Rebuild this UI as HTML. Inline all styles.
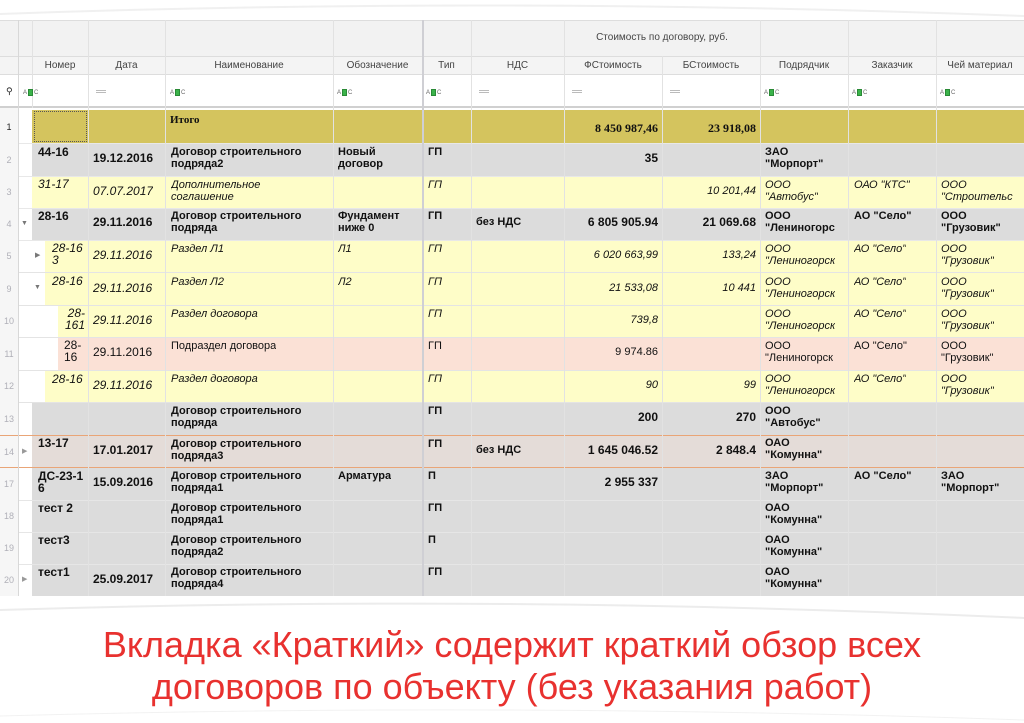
<!DOCTYPE html>
<html><head><meta charset="utf-8">
<style>
*{margin:0;padding:0;box-sizing:border-box}
body{width:1024px;height:723px;background:#fff;position:relative;overflow:hidden;font-family:"Liberation Sans","DejaVu Sans",sans-serif;font-size:11px;color:#111}
.a{position:absolute}
.c{position:absolute;line-height:12px;white-space:nowrap;overflow:hidden}
.r{text-align:right}
.b{font-weight:bold}
.i{font-style:italic}
.rn{position:absolute;left:0;width:18px;text-align:center;font-size:9px;color:#b0b0b8}
.h{position:absolute;font-size:10px;color:#444;text-align:center;line-height:12px}
.vl{position:absolute;top:20px;height:576px;width:1px;background:#e2e2e2}
.abc{position:absolute;top:89px;font-size:6px;color:#666}
.abc span{display:inline-block;width:5px;height:7px;background:#3bb34a;vertical-align:middle;margin:0 1px;border:1px solid #2a8a36}
.eq{position:absolute;top:90px;width:10px;height:3px;border-top:1px solid #bbb;border-bottom:1px solid #bbb}
.cap{position:absolute;left:0;width:1024px;text-align:center;color:#e8312f;font-size:36px;line-height:42px;white-space:nowrap}
</style></head><body>
<div class="a" style="left:0;top:20px;width:1024px;height:36px;background:#f2f2f2;border-top:1px solid #ddd"></div>
<div class="a" style="left:0;top:56px;width:1024px;height:19px;background:#f4f4f4;border-top:1px solid #ddd;border-bottom:1px solid #ddd"></div>
<div class="a" style="left:0;top:75px;width:1024px;height:33px;background:#fff;border-bottom:2px solid #d0d0d0"></div>
<div class="a" style="left:0;top:108px;width:18px;height:488px;background:#f6f6f6"></div>

<div class="a" style="left:32px;top:110px;width:992px;height:33px;background:#d4c45e"></div>
<div class="a" style="left:34px;top:111px;width:53px;height:31px;border:1px dotted #555"></div>
<div class="a" style="left:32px;top:143px;width:992px;height:33px;background:#dcdcdc"></div>
<div class="a" style="left:32px;top:176px;width:992px;height:32px;background:#fefdc8"></div>
<div class="a" style="left:32px;top:208px;width:992px;height:32px;background:#dcdcdc"></div>
<div class="a" style="left:45px;top:240px;width:979px;height:32px;background:#fefdc8"></div>
<div class="a" style="left:45px;top:272px;width:979px;height:33px;background:#fefdc8"></div>
<div class="a" style="left:58px;top:305px;width:966px;height:32px;background:#fefdc8"></div>
<div class="a" style="left:58px;top:337px;width:966px;height:33px;background:#fbe1d6"></div>
<div class="a" style="left:45px;top:370px;width:979px;height:32px;background:#fefdc8"></div>
<div class="a" style="left:32px;top:402px;width:992px;height:33px;background:#dcdcdc"></div>
<div class="a" style="left:32px;top:435px;width:992px;height:33px;background:#e4dcd8"></div>
<div class="a" style="left:0;top:435px;width:1024px;height:1px;background:#e9a577"></div>
<div class="a" style="left:0;top:467px;width:1024px;height:1px;background:#e9a577"></div>
<div class="a" style="left:32px;top:468px;width:992px;height:128px;background:#dcdcdc"></div>
<div class="a" style="left:18px;top:143px;width:1006px;height:1px;background:#e8e8e8"></div>
<div class="a" style="left:18px;top:176px;width:1006px;height:1px;background:#e8e8e8"></div>
<div class="a" style="left:18px;top:208px;width:1006px;height:1px;background:#e8e8e8"></div>
<div class="a" style="left:18px;top:240px;width:1006px;height:1px;background:#e8e8e8"></div>
<div class="a" style="left:18px;top:272px;width:1006px;height:1px;background:#e4e4e4"></div>
<div class="a" style="left:18px;top:305px;width:1006px;height:1px;background:#e4e4e4"></div>
<div class="a" style="left:18px;top:337px;width:1006px;height:1px;background:#e4e4e4"></div>
<div class="a" style="left:18px;top:370px;width:1006px;height:1px;background:#e4e4e4"></div>
<div class="a" style="left:18px;top:402px;width:1006px;height:1px;background:#e4e4e4"></div>
<div class="a" style="left:18px;top:500px;width:1006px;height:1px;background:#e6e6e6"></div>
<div class="a" style="left:18px;top:532px;width:1006px;height:1px;background:#e6e6e6"></div>
<div class="a" style="left:18px;top:564px;width:1006px;height:1px;background:#e6e6e6"></div>

<div class="vl" style="left:18px;background:#d8d8d8"></div>
<div class="vl" style="left:32px;height:88px"></div>
<div class="vl" style="left:88px"></div>
<div class="vl" style="left:165px"></div>
<div class="vl" style="left:333px"></div>
<div class="vl" style="left:422px;width:2px;background:#cfcfd4"></div>
<div class="vl" style="left:471px"></div>
<div class="vl" style="left:564px"></div>
<div class="vl" style="left:662px;top:56px;height:540px"></div>
<div class="vl" style="left:760px"></div>
<div class="vl" style="left:848px"></div>
<div class="vl" style="left:936px"></div>

<div class="h" style="left:564px;top:32px;width:196px">Стоимость по договору, руб.</div>
<div class="h" style="left:32px;top:60px;width:56px">Номер</div>
<div class="h" style="left:88px;top:60px;width:77px">Дата</div>
<div class="h" style="left:165px;top:60px;width:168px">Наименование</div>
<div class="h" style="left:333px;top:60px;width:89px">Обозначение</div>
<div class="h" style="left:422px;top:60px;width:49px">Тип</div>
<div class="h" style="left:471px;top:60px;width:93px">НДС</div>
<div class="h" style="left:564px;top:60px;width:98px">ФСтоимость</div>
<div class="h" style="left:662px;top:60px;width:98px">БСтоимость</div>
<div class="h" style="left:760px;top:60px;width:88px">Подрядчик</div>
<div class="h" style="left:848px;top:60px;width:88px">Заказчик</div>
<div class="h" style="left:936px;top:60px;width:88px">Чей материал</div>
<div class="a" style="left:6px;top:86px;font-size:9px;color:#222">&#9906;</div>
<div class="abc" style="left:23px">A<span></span>C</div>
<div class="eq" style="left:96px"></div>
<div class="abc" style="left:170px">A<span></span>C</div>
<div class="abc" style="left:337px">A<span></span>C</div>
<div class="abc" style="left:426px">A<span></span>C</div>
<div class="eq" style="left:479px"></div>
<div class="eq" style="left:572px"></div>
<div class="eq" style="left:670px"></div>
<div class="abc" style="left:764px">A<span></span>C</div>
<div class="abc" style="left:852px">A<span></span>C</div>
<div class="abc" style="left:940px">A<span></span>C</div>

<div class="rn" style="top:122px;color:#222">1</div>
<div class="rn" style="top:155px">2</div>
<div class="rn" style="top:187px">3</div>
<div class="rn" style="top:219px">4</div>
<div class="rn" style="top:251px">5</div>
<div class="rn" style="top:284px">9</div>
<div class="rn" style="top:316px">10</div>
<div class="rn" style="top:349px">11</div>
<div class="rn" style="top:381px">12</div>
<div class="rn" style="top:414px">13</div>
<div class="rn" style="top:447px">14</div>
<div class="rn" style="top:479px">17</div>
<div class="rn" style="top:511px">18</div>
<div class="rn" style="top:543px">19</div>
<div class="rn" style="top:575px">20</div>
<div class="a" style="left:21px;top:220px;font-size:7px;color:#777">&#9660;</div>
<div class="a" style="left:35px;top:251px;font-size:7px;color:#777">&#9654;</div>
<div class="a" style="left:34px;top:284px;font-size:7px;color:#777">&#9660;</div>
<div class="a" style="left:22px;top:447px;font-size:7px;color:#999">&#9654;</div>
<div class="a" style="left:22px;top:575px;font-size:7px;color:#999">&#9654;</div>

<div class="c b" style="left:170px;top:114px;font-family:'Liberation Serif',serif">Итого</div>
<div class="c r b" style="left:564px;top:122px;width:94px;font-family:'Liberation Serif',serif;font-size:12px">8 450 987,46</div>
<div class="c r b" style="left:662px;top:122px;width:94px;font-family:'Liberation Serif',serif;font-size:12px">23 918,08</div>
<div class="b">
<div class="c" style="left:38px;top:146px;font-size:12px">44-16</div>
<div class="c" style="left:93px;top:152px;font-size:12px">19.12.2016</div>
<div class="c" style="left:171px;top:146px">Договор строительного<br>подряда2</div>
<div class="c" style="left:338px;top:146px">Новый<br>договор</div>
<div class="c" style="left:428px;top:146px">ГП</div>
<div class="c r" style="left:564px;top:152px;width:94px;font-size:12px">35</div>
<div class="c" style="left:765px;top:146px">ЗАО<br>"Морпорт"</div>
</div>
<div class="i">
<div class="c" style="left:38px;top:178px;font-size:12px">31-17</div>
<div class="c" style="left:93px;top:185px;font-size:12px">07.07.2017</div>
<div class="c" style="left:171px;top:179px">Дополнительное<br>соглашение</div>
<div class="c" style="left:428px;top:179px">ГП</div>
<div class="c r" style="left:662px;top:185px;width:94px">10 201,44</div>
<div class="c" style="left:765px;top:179px">ООО<br>"Автобус"</div>
<div class="c" style="left:854px;top:179px">ОАО "КТС"</div>
<div class="c" style="left:941px;top:179px">ООО<br>"Строительс</div>
</div>
<div class="b">
<div class="c" style="left:38px;top:210px;font-size:12px">28-16</div>
<div class="c" style="left:93px;top:216px;font-size:12px">29.11.2016</div>
<div class="c" style="left:171px;top:210px">Договор строительного<br>подряда</div>
<div class="c" style="left:338px;top:210px">Фундамент<br>ниже 0</div>
<div class="c" style="left:428px;top:210px">ГП</div>
<div class="c" style="left:476px;top:216px">без НДС</div>
<div class="c r" style="left:564px;top:216px;width:94px;font-size:12px">6 805 905.94</div>
<div class="c r" style="left:662px;top:216px;width:94px;font-size:12px">21 069.68</div>
<div class="c" style="left:765px;top:210px">ООО<br>"Лениногорс</div>
<div class="c" style="left:854px;top:210px">АО "Село"</div>
<div class="c" style="left:941px;top:210px">ООО<br>"Грузовик"</div>
</div>
<div class="i">
<div class="c" style="left:52px;top:242px;font-size:12px">28-16<br>3</div>
<div class="c" style="left:93px;top:249px;font-size:12px">29.11.2016</div>
<div class="c" style="left:171px;top:243px">Раздел Л1</div>
<div class="c" style="left:338px;top:243px">Л1</div>
<div class="c" style="left:428px;top:243px">ГП</div>
<div class="c r" style="left:564px;top:249px;width:94px">6 020 663,99</div>
<div class="c r" style="left:662px;top:249px;width:94px">133,24</div>
<div class="c" style="left:765px;top:243px">ООО<br>"Лениногорск</div>
<div class="c" style="left:854px;top:243px">АО "Село"</div>
<div class="c" style="left:941px;top:243px">ООО<br>"Грузовик"</div>
</div>
<div class="i">
<div class="c" style="left:52px;top:275px;font-size:12px">28-16</div>
<div class="c" style="left:93px;top:282px;font-size:12px">29.11.2016</div>
<div class="c" style="left:171px;top:276px">Раздел Л2</div>
<div class="c" style="left:338px;top:276px">Л2</div>
<div class="c" style="left:428px;top:276px">ГП</div>
<div class="c r" style="left:564px;top:282px;width:94px">21 533,08</div>
<div class="c r" style="left:662px;top:282px;width:94px">10 441</div>
<div class="c" style="left:765px;top:276px">ООО<br>"Лениногорск</div>
<div class="c" style="left:854px;top:276px">АО "Село"</div>
<div class="c" style="left:941px;top:276px">ООО<br>"Грузовик"</div>
</div>
<div class="i">
<div class="c r" style="left:58px;top:307px;width:27px;font-size:12px">28-<br>161</div>
<div class="c" style="left:93px;top:314px;font-size:12px">29.11.2016</div>
<div class="c" style="left:171px;top:308px">Раздел договора</div>
<div class="c" style="left:428px;top:308px">ГП</div>
<div class="c r" style="left:564px;top:314px;width:94px">739,8</div>
<div class="c" style="left:765px;top:308px">ООО<br>"Лениногорск</div>
<div class="c" style="left:854px;top:308px">АО "Село"</div>
<div class="c" style="left:941px;top:308px">ООО<br>"Грузовик"</div>
</div>
<div>
<div class="c" style="left:64px;top:339px;font-size:12px">28-<br>16</div>
<div class="c" style="left:93px;top:346px;font-size:12px">29.11.2016</div>
<div class="c" style="left:171px;top:340px">Подраздел договора</div>
<div class="c" style="left:428px;top:340px">ГП</div>
<div class="c r" style="left:564px;top:346px;width:94px">9 974.86</div>
<div class="c" style="left:765px;top:340px">ООО<br>"Лениногорск</div>
<div class="c" style="left:854px;top:340px">АО "Село"</div>
<div class="c" style="left:941px;top:340px">ООО<br>"Грузовик"</div>
</div>
<div class="i">
<div class="c" style="left:52px;top:373px;font-size:12px">28-16</div>
<div class="c" style="left:93px;top:379px;font-size:12px">29.11.2016</div>
<div class="c" style="left:171px;top:373px">Раздел договора</div>
<div class="c" style="left:428px;top:373px">ГП</div>
<div class="c r" style="left:564px;top:379px;width:94px">90</div>
<div class="c r" style="left:662px;top:379px;width:94px">99</div>
<div class="c" style="left:765px;top:373px">ООО<br>"Лениногорск</div>
<div class="c" style="left:854px;top:373px">АО "Село"</div>
<div class="c" style="left:941px;top:373px">ООО<br>"Грузовик"</div>
</div>
<div class="b">
<div class="c" style="left:171px;top:405px">Договор строительного<br>подряда</div>
<div class="c" style="left:428px;top:405px">ГП</div>
<div class="c r" style="left:564px;top:411px;width:94px;font-size:12px">200</div>
<div class="c r" style="left:662px;top:411px;width:94px;font-size:12px">270</div>
<div class="c" style="left:765px;top:405px">ООО<br>"Автобус"</div>
</div>
<div class="b">
<div class="c" style="left:38px;top:437px;font-size:12px">13-17</div>
<div class="c" style="left:93px;top:444px;font-size:12px">17.01.2017</div>
<div class="c" style="left:171px;top:438px">Договор строительного<br>подряда3</div>
<div class="c" style="left:428px;top:438px">ГП</div>
<div class="c" style="left:476px;top:444px">без НДС</div>
<div class="c r" style="left:564px;top:444px;width:94px;font-size:12px">1 645 046.52</div>
<div class="c r" style="left:662px;top:444px;width:94px;font-size:12px">2 848.4</div>
<div class="c" style="left:765px;top:437px">ОАО<br>"Комунна"</div>
</div>
<div class="b">
<div class="c" style="left:38px;top:470px;font-size:12px">ДС-23-1<br>6</div>
<div class="c" style="left:93px;top:476px;font-size:12px">15.09.2016</div>
<div class="c" style="left:171px;top:470px">Договор строительного<br>подряда1</div>
<div class="c" style="left:338px;top:470px">Арматура</div>
<div class="c" style="left:428px;top:470px">П</div>
<div class="c r" style="left:564px;top:476px;width:94px;font-size:12px">2 955 337</div>
<div class="c" style="left:765px;top:470px">ЗАО<br>"Морпорт"</div>
<div class="c" style="left:854px;top:470px">АО "Село"</div>
<div class="c" style="left:941px;top:470px">ЗАО<br>"Морпорт"</div>
</div>
<div class="b">
<div class="c" style="left:38px;top:502px;font-size:12px">тест 2</div>
<div class="c" style="left:171px;top:502px">Договор строительного<br>подряда1</div>
<div class="c" style="left:428px;top:502px">ГП</div>
<div class="c" style="left:765px;top:502px">ОАО<br>"Комунна"</div>
</div>
<div class="b">
<div class="c" style="left:38px;top:534px;font-size:12px">тест3</div>
<div class="c" style="left:171px;top:534px">Договор строительного<br>подряда2</div>
<div class="c" style="left:428px;top:534px">П</div>
<div class="c" style="left:765px;top:534px">ОАО<br>"Комунна"</div>
</div>
<div class="b">
<div class="c" style="left:38px;top:566px;font-size:12px">тест1</div>
<div class="c" style="left:93px;top:573px;font-size:12px">25.09.2017</div>
<div class="c" style="left:171px;top:566px">Договор строительного<br>подряда4</div>
<div class="c" style="left:428px;top:566px">ГП</div>
<div class="c" style="left:765px;top:566px">ОАО<br>"Комунна"</div>
</div>

<svg class="a" style="left:0;top:596px" width="1024" height="127">
<path d="M0 14 Q500 -2 1024 22" stroke="#ececec" fill="none" stroke-width="2"/>
<path d="M0 120 Q500 106 1024 124" stroke="#f2f2f2" fill="none"/>
</svg>
<svg class="a" style="left:0;top:0" width="1024" height="20">
<path d="M0 14 Q500 -4 1024 16" stroke="#f0f0f0" fill="none" stroke-width="2"/>
</svg>

<div class="cap" style="top:624px">Вкладка «Краткий» содержит краткий обзор всех</div>
<div class="cap" style="top:666px">договоров по объекту (без указания работ)</div>
</body></html>
